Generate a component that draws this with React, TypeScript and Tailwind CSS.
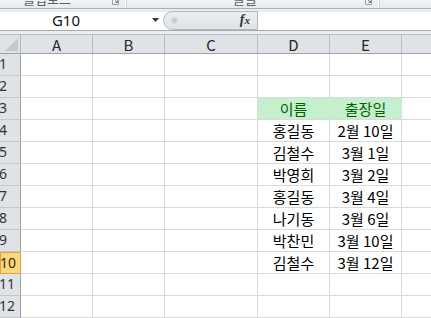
import { FC } from "react";

const cols = [
  { key: "A", w: "w-[72px]" },
  { key: "B", w: "w-[72px]" },
  { key: "C", w: "w-[93px]" },
  { key: "D", w: "w-[72px]" },
  { key: "E", w: "w-[72px]" },
];

const data: Record<number, [string, string]> = {
  4: ["홍길동", "2월 10일"],
  5: ["김철수", "3월 1일"],
  6: ["박영희", "3월 2일"],
  7: ["홍길동", "3월 4일"],
  8: ["나기동", "3월 6일"],
  9: ["박찬민", "3월 10일"],
  10: ["김철수", "3월 12일"],
};

const kr = "font-['Noto_Sans_CJK_KR','Noto_Sans',sans-serif]";

const Launcher: FC = () => (
  <svg width="7" height="5" viewBox="0 0 7 5" className="shrink-0">
    <path d="M0.5 0 V4.5 H6.5 V0" fill="none" stroke="#9aa1aa" strokeWidth="1" />
    <path d="M3 0 L5.5 2.5 M5.5 0.5 V2.5 H3.5" fill="none" stroke="#7d848d" strokeWidth="1" />
  </svg>
);

const Ribbon: FC = () => (
  <div className="h-[11px] flex bg-gradient-to-b from-[#f2f4f7] to-[#e6e9ed] border-b border-[#a9b0b9] overflow-hidden">
    <div className="w-[125px] flex items-start justify-between pl-[23px] pr-[6px]">
      <span className={`${kr} text-[13px] leading-[13px] -mt-[8px] text-[#5b6068]`}>클립보드</span>
      <Launcher />
    </div>
    <div className="w-[2px] bg-[#d3d7dc] border-l border-white" />
    <div className="w-[251px] flex items-start justify-between pl-[106px] pr-[6px]">
      <span className={`${kr} text-[13px] leading-[13px] -mt-[8px] text-[#5b6068]`}>글꼴</span>
      <Launcher />
    </div>
    <div className="w-[2px] bg-[#d3d7dc] border-l border-white" />
    <div className="flex-1" />
  </div>
);

const FormulaBar: FC = () => (
  <>
    <div className="h-[3px] bg-[#e9ecf0]" />
    <div className="h-[23px] flex bg-white border-b border-[#a5abb3]">
      <div className="w-[163px] flex items-center">
        <span className="w-[132px] text-center font-['Noto_Sans',sans-serif] text-[15px] leading-none text-[#111]">G10</span>
        <svg width="8" height="5" viewBox="0 0 8 5" className="ml-[20px]">
          <path d="M0 0 H7 L3.5 4 Z" fill="#333" />
        </svg>
      </div>
      <div className="w-[95px] flex items-center bg-gradient-to-b from-[#eceef1] to-[#dfe2e6] border-y border-l border-r border-[#b4bac2] rounded-l-[11px] -mt-px">
        <div className="ml-[7px] w-[7px] h-[7px] rounded-full bg-[#c9cdd3] border border-[#d9dde2]" />
        <span className="ml-auto mr-[7px] font-['Liberation_Serif',serif] italic font-bold text-[14px] leading-none text-[#333]">
          f<span className="text-[11px]">x</span>
        </span>
      </div>
      <div className="flex-1 bg-white" />
    </div>
    <div className="h-[4px] bg-[#e9ecf0]" />
  </>
);

const Corner: FC = () => (
  <div className="w-[21px] h-full shrink-0 border-r border-[#b3b8bf] flex items-end justify-end pb-[2px] pr-[2px]">
    <svg width="13" height="13" viewBox="0 0 13 13">
      <path d="M13 0 V13 H0 Z" fill="#c5c9cf" />
    </svg>
  </div>
);

const HeaderRow: FC = () => (
  <div className="h-[23px] flex bg-[#dfe2e7] border-t border-b border-[#b6bbc2] border-b-[#9ca2aa]">
    <Corner />
    {cols.map(c => (
      <div
        key={c.key}
        className={`${c.w} shrink-0 border-r border-[#b8bdc4] flex items-center justify-center ${kr} text-[15px] leading-none text-[#262626]`}
      >
        {c.key}
      </div>
    ))}
    <div className="flex-1" />
  </div>
);

const Row: FC<{ n: number }> = ({ n }) => {
  const selected = n === 10;
  const vals = data[n];
  const isHead = n === 3;
  return (
    <div className="h-[22px] flex shrink-0">
      <div
        className={`w-[21px] shrink-0 flex items-center font-['Noto_Sans',sans-serif] text-[14px] leading-none ${
          selected
            ? "bg-[#f9d77d] border border-[#e2a43e] text-[#3b2c12]"
            : "bg-[#dfe2e7] border-r border-b border-r-[#9ca2aa] border-b-[#c4c8ce] text-[#333]"
        }`}
      >
        <span className="-ml-[1px]">{n}</span>
      </div>
      {cols.map((c, i) => {
        let text = "";
        if (i === 3 && vals) text = vals[0];
        if (i === 4 && vals) text = vals[1];
        if (isHead && i === 3) text = "이름";
        if (isHead && i === 4) text = "출장일";
        const green = isHead && (i === 3 || i === 4);
        return (
          <div
            key={c.key}
            className={`${c.w} shrink-0 border-r border-b border-[#d9d9d9] flex items-center justify-center ${kr} text-[15px] leading-none ${
              green ? "bg-[#c6efce] text-[#006100] border-r-[#c6efce]" : "bg-white text-black"
            }`}
          >
            {text}
          </div>
        );
      })}
      <div className="flex-1 border-b border-[#d9d9d9] bg-white" />
    </div>
  );
};

export default function App() {
  return (
    <div className="w-[431px] h-[318px] overflow-hidden bg-white flex flex-col">
      <Ribbon />
      <FormulaBar />
      <HeaderRow />
      {Array.from({ length: 12 }).map((_, i) => (
        <Row key={i} n={i + 1} />
      ))}
    </div>
  );
}
